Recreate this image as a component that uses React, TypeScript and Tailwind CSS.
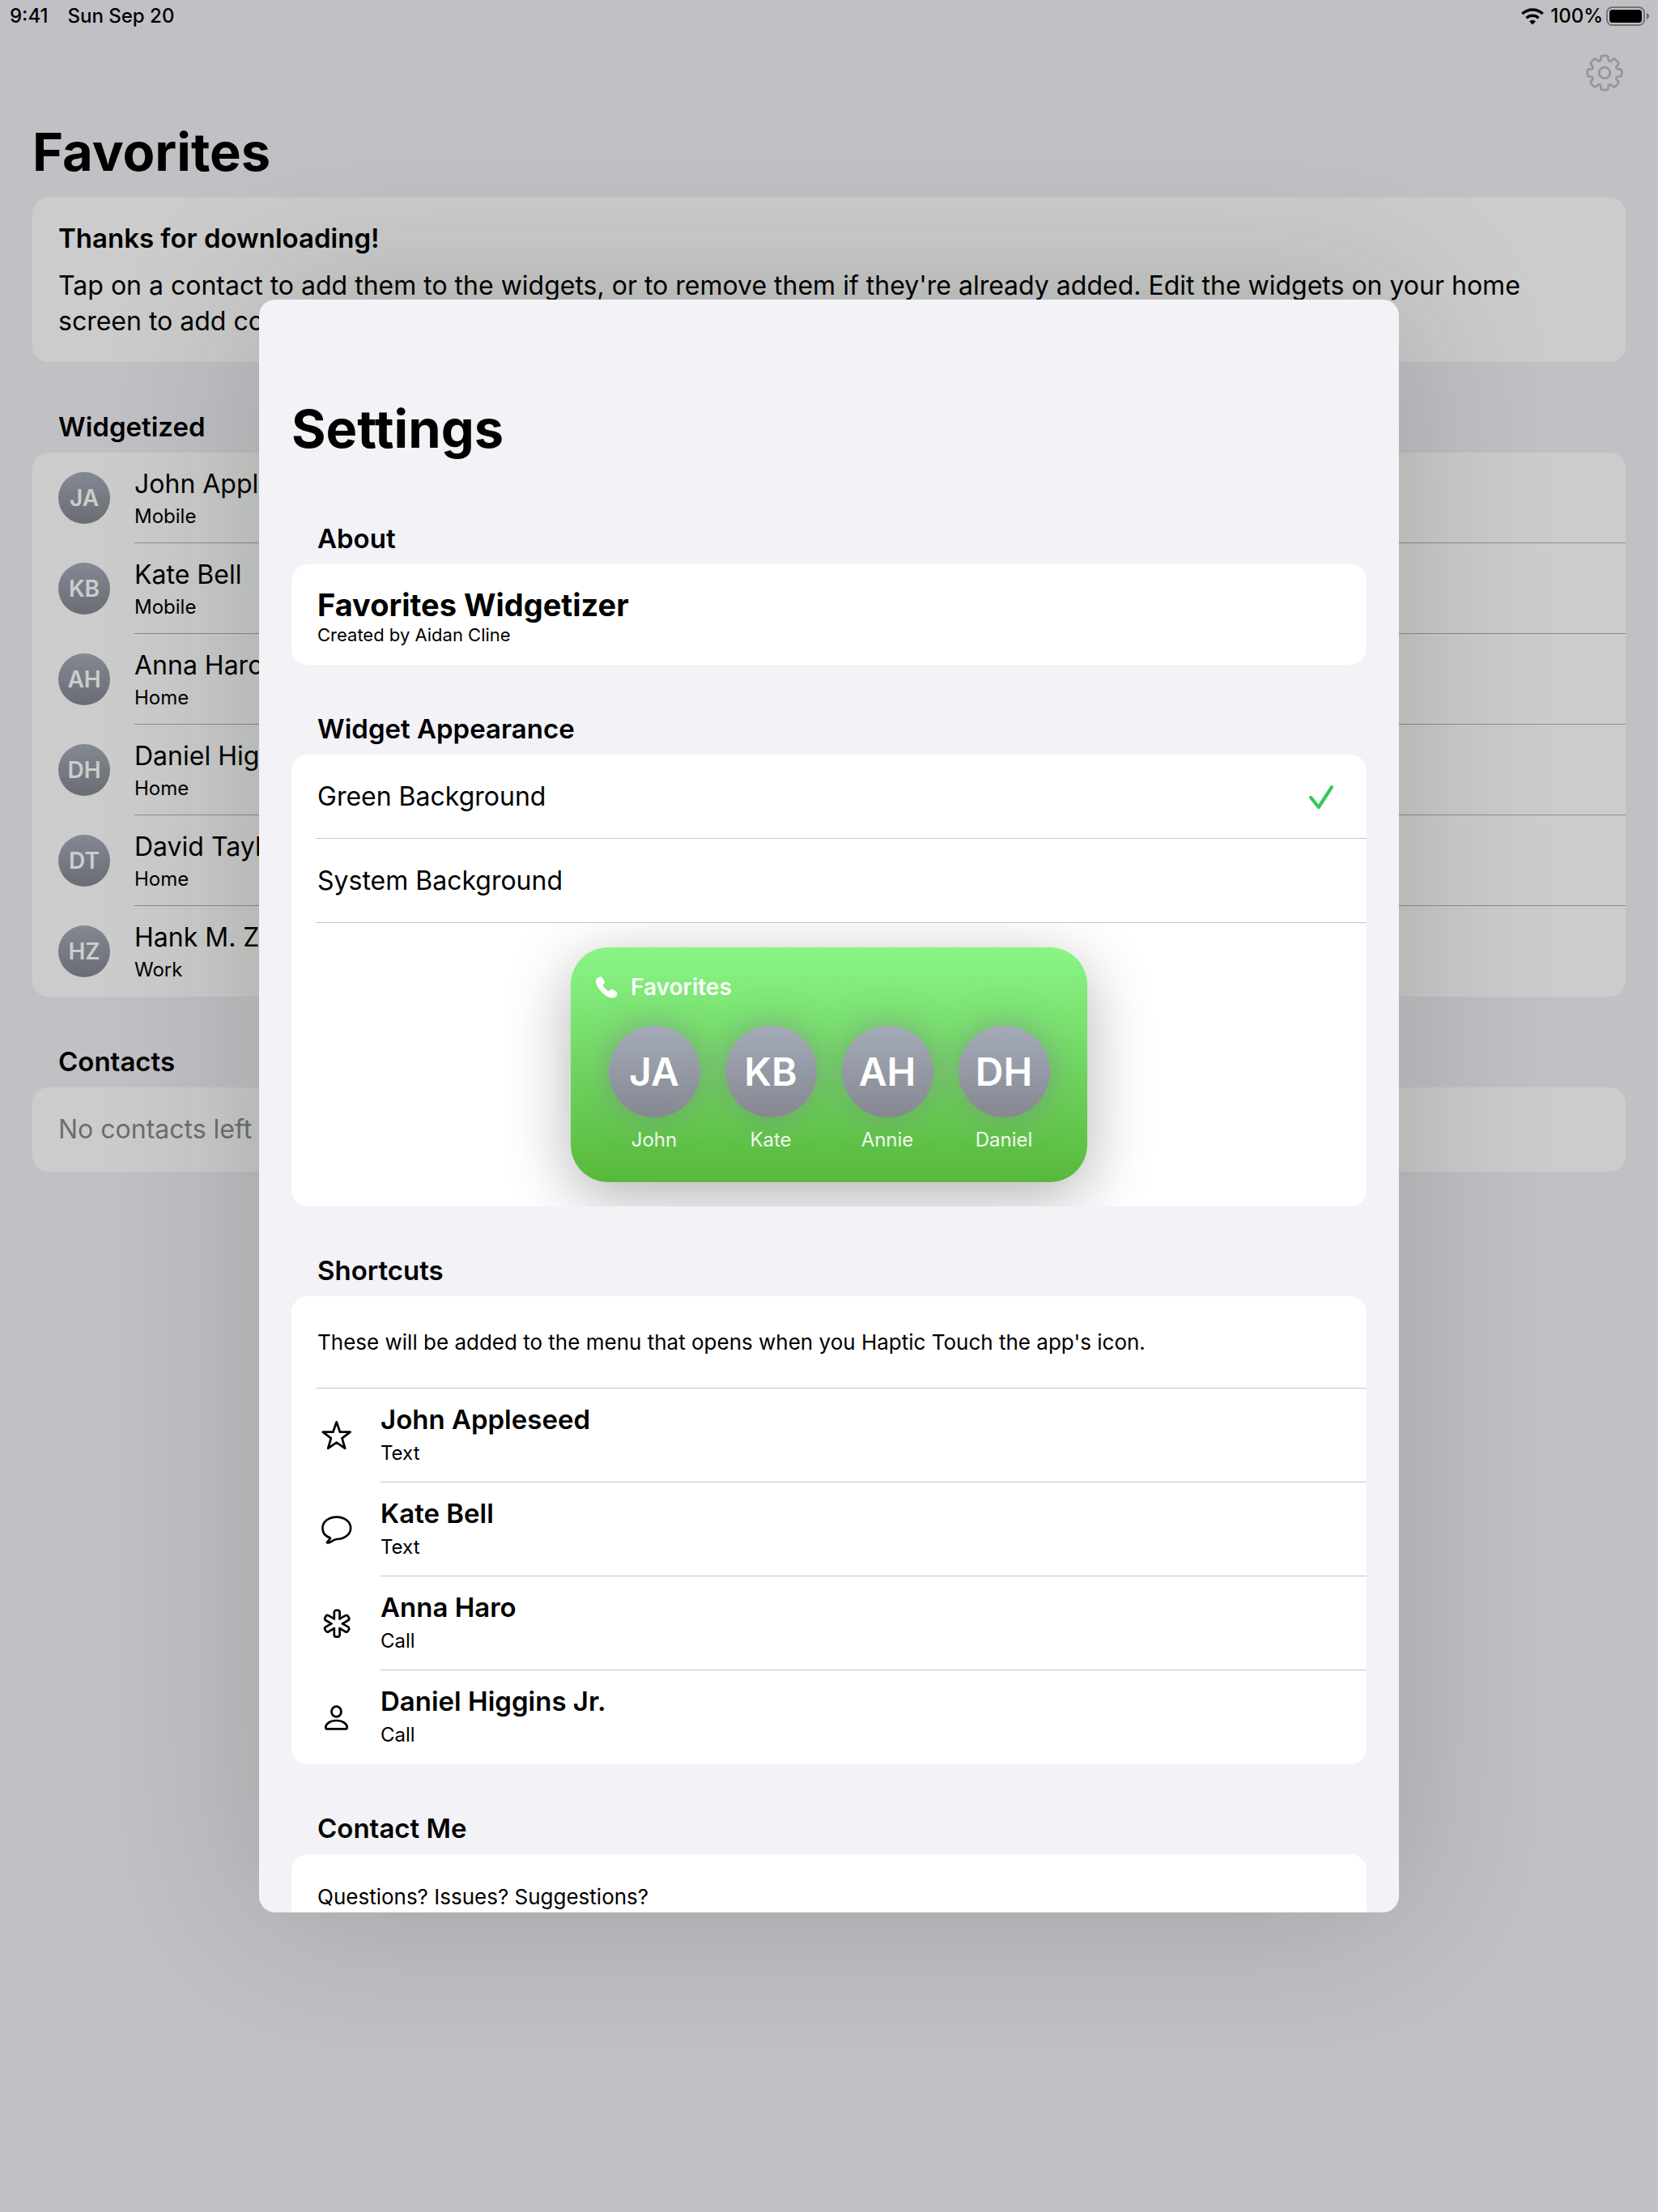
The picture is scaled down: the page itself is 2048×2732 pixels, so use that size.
import React, { useState } from "react";

type Contact = { initials: string; name: string; kind: string };

const CONTACTS: Contact[] = [
  { initials: "JA", name: "John Appleseed", kind: "Mobile" },
  { initials: "KB", name: "Kate Bell", kind: "Mobile" },
  { initials: "AH", name: "Anna Haro", kind: "Home" },
  { initials: "DH", name: "Daniel Higgins Jr.", kind: "Home" },
  { initials: "DT", name: "David Taylor", kind: "Home" },
  { initials: "HZ", name: "Hank M. Zakroff", kind: "Work" },
];

const WIDGET_PEOPLE = [
  { initials: "JA", name: "John" },
  { initials: "KB", name: "Kate" },
  { initials: "AH", name: "Annie" },
  { initials: "DH", name: "Daniel" },
];

/* ---------- icons ---------- */

type Point = [number, number];

function polar(radius: number, degrees: number): Point {
  const a = (degrees * Math.PI) / 180;
  return [24 + radius * Math.sin(a), 24 - radius * Math.cos(a)];
}

/* Closed polygon whose corners are softened by the given distance. */
function roundedPolygon(points: Point[], soften: number) {
  const towards = (from: Point, to: Point): Point => {
    const length = Math.hypot(to[0] - from[0], to[1] - from[1]);
    const k = Math.min(soften / length, 0.5);
    return [from[0] + (to[0] - from[0]) * k, from[1] + (to[1] - from[1]) * k];
  };
  const f = (p: Point) => `${p[0].toFixed(2)} ${p[1].toFixed(2)}`;
  return (
    points
      .map((p, i) => {
        const before = towards(p, points[(i + points.length - 1) % points.length]);
        const after = towards(p, points[(i + 1) % points.length]);
        return `${i === 0 ? "M" : "L"}${f(before)}Q${f(p)} ${f(after)}`;
      })
      .join("") + "Z"
  );
}

const GEAR_PATH = roundedPolygon(
  [0, 45, 90, 135, 180, 225, 270, 315].flatMap((a) => [
    polar(15.6, a - 18),
    polar(21.6, a - 11.5),
    polar(21.6, a + 11.5),
    polar(15.6, a + 18),
  ]),
  2.2,
);

function GearIcon() {
  return (
    <svg viewBox="0 0 48 48" className="size-12" fill="none" stroke="#bdbdbd" strokeWidth="2.8" strokeLinejoin="round" aria-hidden="true">
      <path d={GEAR_PATH} />
      <circle cx="24" cy="24" r="6.8" />
    </svg>
  );
}

function WifiIcon() {
  return (
    <svg viewBox="0 0 28 21" className="h-[21px] w-7" fill="none" stroke="#000" strokeWidth="3.5" aria-hidden="true">
      <path d="M1.3 7A18.3 18.3 0 0 1 26.7 7" />
      <path d="M6.5 12.2A11 11 0 0 1 21.5 12.2" />
      <path d="M14 20.4L10.1 16.4A5.6 5.6 0 0 1 17.9 16.4Z" fill="#000" stroke="none" />
    </svg>
  );
}

function BatteryIcon() {
  return (
    <svg viewBox="0 0 54 24" className="h-6 w-[54px]" aria-hidden="true">
      <rect x="1" y="1" width="46" height="22" rx="6.5" fill="none" stroke="#000" strokeOpacity=".4" strokeWidth="2" />
      <rect x="4" y="4" width="40" height="16" rx="3.8" />
      <path d="M50 8c1.8.7 3 2.2 3 4s-1.2 3.3-3 4z" fillOpacity=".45" />
    </svg>
  );
}

function CheckIcon() {
  return (
    <svg viewBox="0 0 32 32" className="size-8" fill="none" stroke="#34c759" strokeWidth="4.2" strokeLinecap="round" strokeLinejoin="round" aria-hidden="true">
      <path d="M3.2 17L12.8 29L29 4.200" />
    </svg>
  );
}

function HandsetIcon() {
  return (
    <svg viewBox="0 0 27 27" className="size-[27px]" fill="#fff" aria-hidden="true">
      <path d="M4.6.4C6.4 0 7.6.8 8.6 2.4L10.6 5.4C11.4 6.8 11.1 7.8 10.1 8.7L8.9 9.9C8.4 10.5 8.6 11.2 9.2 12C10.8 14.3 12.5 16 14.8 17.7C15.6 18.2 16.2 18.3 16.8 17.8L18.1 16.6C19 15.7 20 15.5 21.3 16.2L24.6 18.3C26.2 19.4 26.9 20.6 26.4 22.1C25.6 24.8 23.6 26.6 20.8 26.6C16.5 26.6 11.2 23.3 7.2 19.2C3 14.9 0 9.8 0 5.8C0 3 1.8 1 4.6.4Z" />
    </svg>
  );
}

function LineIcon({ children }: { children: React.ReactNode }) {
  return (
    <svg viewBox="0 0 48 48" className="size-12 shrink-0" fill="none" stroke="#000" strokeWidth="2.7" strokeLinejoin="round" strokeLinecap="round" aria-hidden="true">
      {children}
    </svg>
  );
}

const StarIcon = () => (
  <LineIcon>
    <path d="M23.7 7.3L28 19.7L40.6 19.7L30.5 27.3L34.2 39.8L23.7 32.6L13.2 39.8L16.9 27.3L6.8 19.7L19.4 19.7Z" />
  </LineIcon>
);

const BubbleIcon = () => (
  <LineIcon>
    <path d="M16 34.6C10 32.5 6.4 28 6.4 22.3C6.4 14.6 14 8.6 23.8 8.6S41.2 14.6 41.2 22.3S33.5 36 23.8 36C21.5 36.2 20 37.4 17.5 38.8C15.5 40 13 40.7 12 40.3C11.5 39.8 15 37.5 16 34.6Z" />
  </LineIcon>
);

const AsteriskIcon = () => (
  <LineIcon>
    {[0, 60, 120, 180, 240, 300].map((angle) => (
      <path
        key={angle}
        transform={`translate(24.2 24.3) rotate(${angle})`}
        d="M-3.4-5.9V-14a2.400 2.400 0 0 1 2.400-2.400h2a2.400 2.400 0 0 1 2.400 2.400V-5.900"
      />
    ))}
  </LineIcon>
);

const PersonIcon = () => (
  <LineIcon>
    <ellipse cx="23.5" cy="17" rx="6" ry="6.4" />
    <path d="M12.5 38.4H34.5Q36.7 38.4 36.7 36.4C36.7 32.2 31.5 28 23.5 28S10.3 32.2 10.3 36.4Q10.3 38.4 12.5 38.4Z" />
  </LineIcon>
);

const SHORTCUTS = [
  { Icon: StarIcon, name: "John Appleseed", action: "Text" },
  { Icon: BubbleIcon, name: "Kate Bell", action: "Text" },
  { Icon: AsteriskIcon, name: "Anna Haro", action: "Call" },
  { Icon: PersonIcon, name: "Daniel Higgins Jr.", action: "Call" },
];

/* ---------- shared pieces ---------- */

function Section({ title, children }: { title: string; children: React.ReactNode }) {
  return (
    <section>
      <h2 className="px-8 pb-3 text-[33px] leading-10 font-semibold">{title}</h2>
      <Card>{children}</Card>
    </section>
  );
}

function Card({ children }: { children: React.ReactNode }) {
  return <div className="overflow-hidden rounded-[20px] bg-white">{children}</div>;
}

/* ---------- favorites page ---------- */

function StatusBar() {
  return (
    <div className="flex h-10 items-center justify-between pr-2.5 pl-3 text-2xl leading-10 font-medium">
      <div className="flex gap-6">
        <span>9:41</span>
        <span>Sun Sep 20</span>
      </div>
      <div className="flex items-center gap-2">
        <WifiIcon />
        <div className="flex items-center gap-1">
          <span>100%</span>
          <BatteryIcon />
        </div>
      </div>
    </div>
  );
}

function ContactRow({ contact, last }: { contact: Contact; last: boolean }) {
  return (
    <button type="button" className="flex h-28 w-full items-center gap-[30px] pl-8 text-left">
      <span className="flex size-16 shrink-0 items-center justify-center rounded-full bg-linear-to-b from-[#a5abb9] to-[#858891] text-[28px] font-semibold text-white">
        {contact.initials}
      </span>
      <span className={`flex h-full flex-1 flex-col gap-1 pt-[19px] ${last ? "" : "border-b border-[#aeaeb0]"}`}>
        <span className="text-[32px] leading-10">{contact.name}</span>
        <span className="text-2xl leading-8">{contact.kind}</span>
      </span>
    </button>
  );
}

function FavoritesPage() {
  return (
    <div>
      <StatusBar />
      <div className="flex h-[100px] items-center justify-end pr-[42px]">
        <button type="button" aria-label="Settings">
          <GearIcon />
        </button>
      </div>
      <main className="px-10">
        <h1 className="mb-2 text-[65px] leading-24 font-bold">Favorites</h1>
        <div className="flex flex-col gap-[60px]">
          <Card>
            <div className="pt-[29px] pr-10 pb-7 pl-8">
              <h2 className="text-[33px] leading-[42px] font-semibold">Thanks for downloading!</h2>
              <p className="mt-4 text-[32px] leading-11">
                Tap on a contact to add them to the widgets, or to remove them if they're already added. Edit the widgets on your home screen to
                add contacts.
              </p>
            </div>
          </Card>
          <Section title="Widgetized">
            {CONTACTS.map((c, i) => (
              <ContactRow key={c.initials} contact={c} last={i === CONTACTS.length - 1} />
            ))}
          </Section>
          <Section title="Contacts">
            <p className="flex h-26 items-center px-8 text-[32px] leading-10 text-[#8a8a8e]">No contacts left</p>
          </Section>
        </div>
      </main>
    </div>
  );
}

/* ---------- settings sheet ---------- */

function WidgetPreview({ green }: { green: boolean }) {
  return (
    <div
      className={`h-[290px] w-[638px] rounded-[46px] px-[31px] pt-[29px] shadow-[0_20px_80px_rgba(0,0,0,0.3)] ${
        green ? "bg-linear-to-b from-[#8af586] to-[#57b93b] text-white" : "bg-white text-black"
      }`}
    >
      <div className="flex items-center gap-4 text-[28px] leading-10 font-semibold">
        <HandsetIcon />
        <span>Favorites</span>
      </div>
      <ul className="mt-7 grid grid-cols-4">
        {WIDGET_PEOPLE.map((p) => (
          <li key={p.initials} className="flex flex-col items-center gap-3">
            <span className="flex size-[113px] items-center justify-center rounded-full bg-linear-to-b from-[#a5abb9] to-[#858891] text-[48px] font-semibold text-white shadow-[0_0_40px_rgba(128,128,142,0.6)]">
              {p.initials}
            </span>
            <span className="text-2xl leading-8 opacity-90">{p.name}</span>
          </li>
        ))}
      </ul>
    </div>
  );
}

function BackgroundOption({ label, checked, onSelect }: { label: string; checked: boolean; onSelect: () => void }) {
  return (
    <label className="ml-[30px] flex h-26 cursor-pointer items-center justify-between border-b border-[#c6c6c8] pr-10 pl-0.5 text-[32px]">
      <input type="radio" name="widget-background" className="sr-only" checked={checked} onChange={onSelect} />
      <span>{label}</span>
      {checked && <CheckIcon />}
    </label>
  );
}

function SettingsSheet() {
  const [background, setBackground] = useState("green");
  return (
    <div
      role="dialog"
      aria-labelledby="settings-title"
      className="h-full max-h-[1992px] w-full max-w-[1408px] overflow-hidden rounded-[20px] bg-[#f2f2f7] px-10 pt-28 shadow-[0_0_200px_rgba(0,24,12,0.2)]"
    >
      <h1 id="settings-title" className="text-[65px] leading-24 font-bold">
        Settings
      </h1>
      <div className="mt-[67px] flex flex-col gap-[59px]">
        <Section title="About">
          <div className="px-8 pt-[26px] pb-6">
            <p className="text-[38px] leading-12 font-bold">Favorites Widgetizer</p>
            <p className="text-[22px] leading-[26px]">Created by Aidan Cline</p>
          </div>
        </Section>

        <Section title="Widget Appearance">
          <BackgroundOption label="Green Background" checked={background === "green"} onSelect={() => setBackground("green")} />
          <BackgroundOption label="System Background" checked={background === "system"} onSelect={() => setBackground("system")} />
          <div className="flex justify-center overflow-hidden py-[30px]">
            <WidgetPreview green={background === "green"} />
          </div>
        </Section>

        <Section title="Shortcuts">
          <p className="ml-[30px] flex h-[114px] items-center border-b border-[#c6c6c8] pl-0.5 text-[26px]">
            These will be added to the menu that opens when you Haptic Touch the app's icon.
          </p>
          {SHORTCUTS.map(({ Icon, name, action }, i) => (
            <button key={name} type="button" className="flex h-29 w-full items-center gap-[30px] pl-8 text-left">
              <Icon />
              <span className={`flex h-full flex-1 flex-col gap-1.5 pt-[18px] ${i === SHORTCUTS.length - 1 ? "" : "border-b border-[#c6c6c8]"}`}>
                <span className="text-[33px] leading-10 font-semibold">{name}</span>
                <span className="text-2xl leading-8">{action}</span>
              </span>
            </button>
          ))}
        </Section>

        <Section title="Contact Me">
          <p className="flex h-26 items-center px-8 text-[26px]">Questions? Issues? Suggestions?</p>
        </Section>
      </div>
    </div>
  );
}

export default function App() {
  return (
    <div className="relative h-screen overflow-hidden bg-[#f2f2f7] font-['Inter',sans-serif] text-black">
      <FavoritesPage />
      <div className="absolute inset-0 flex items-center justify-center bg-black/20">
        <SettingsSheet />
      </div>
    </div>
  );
}
